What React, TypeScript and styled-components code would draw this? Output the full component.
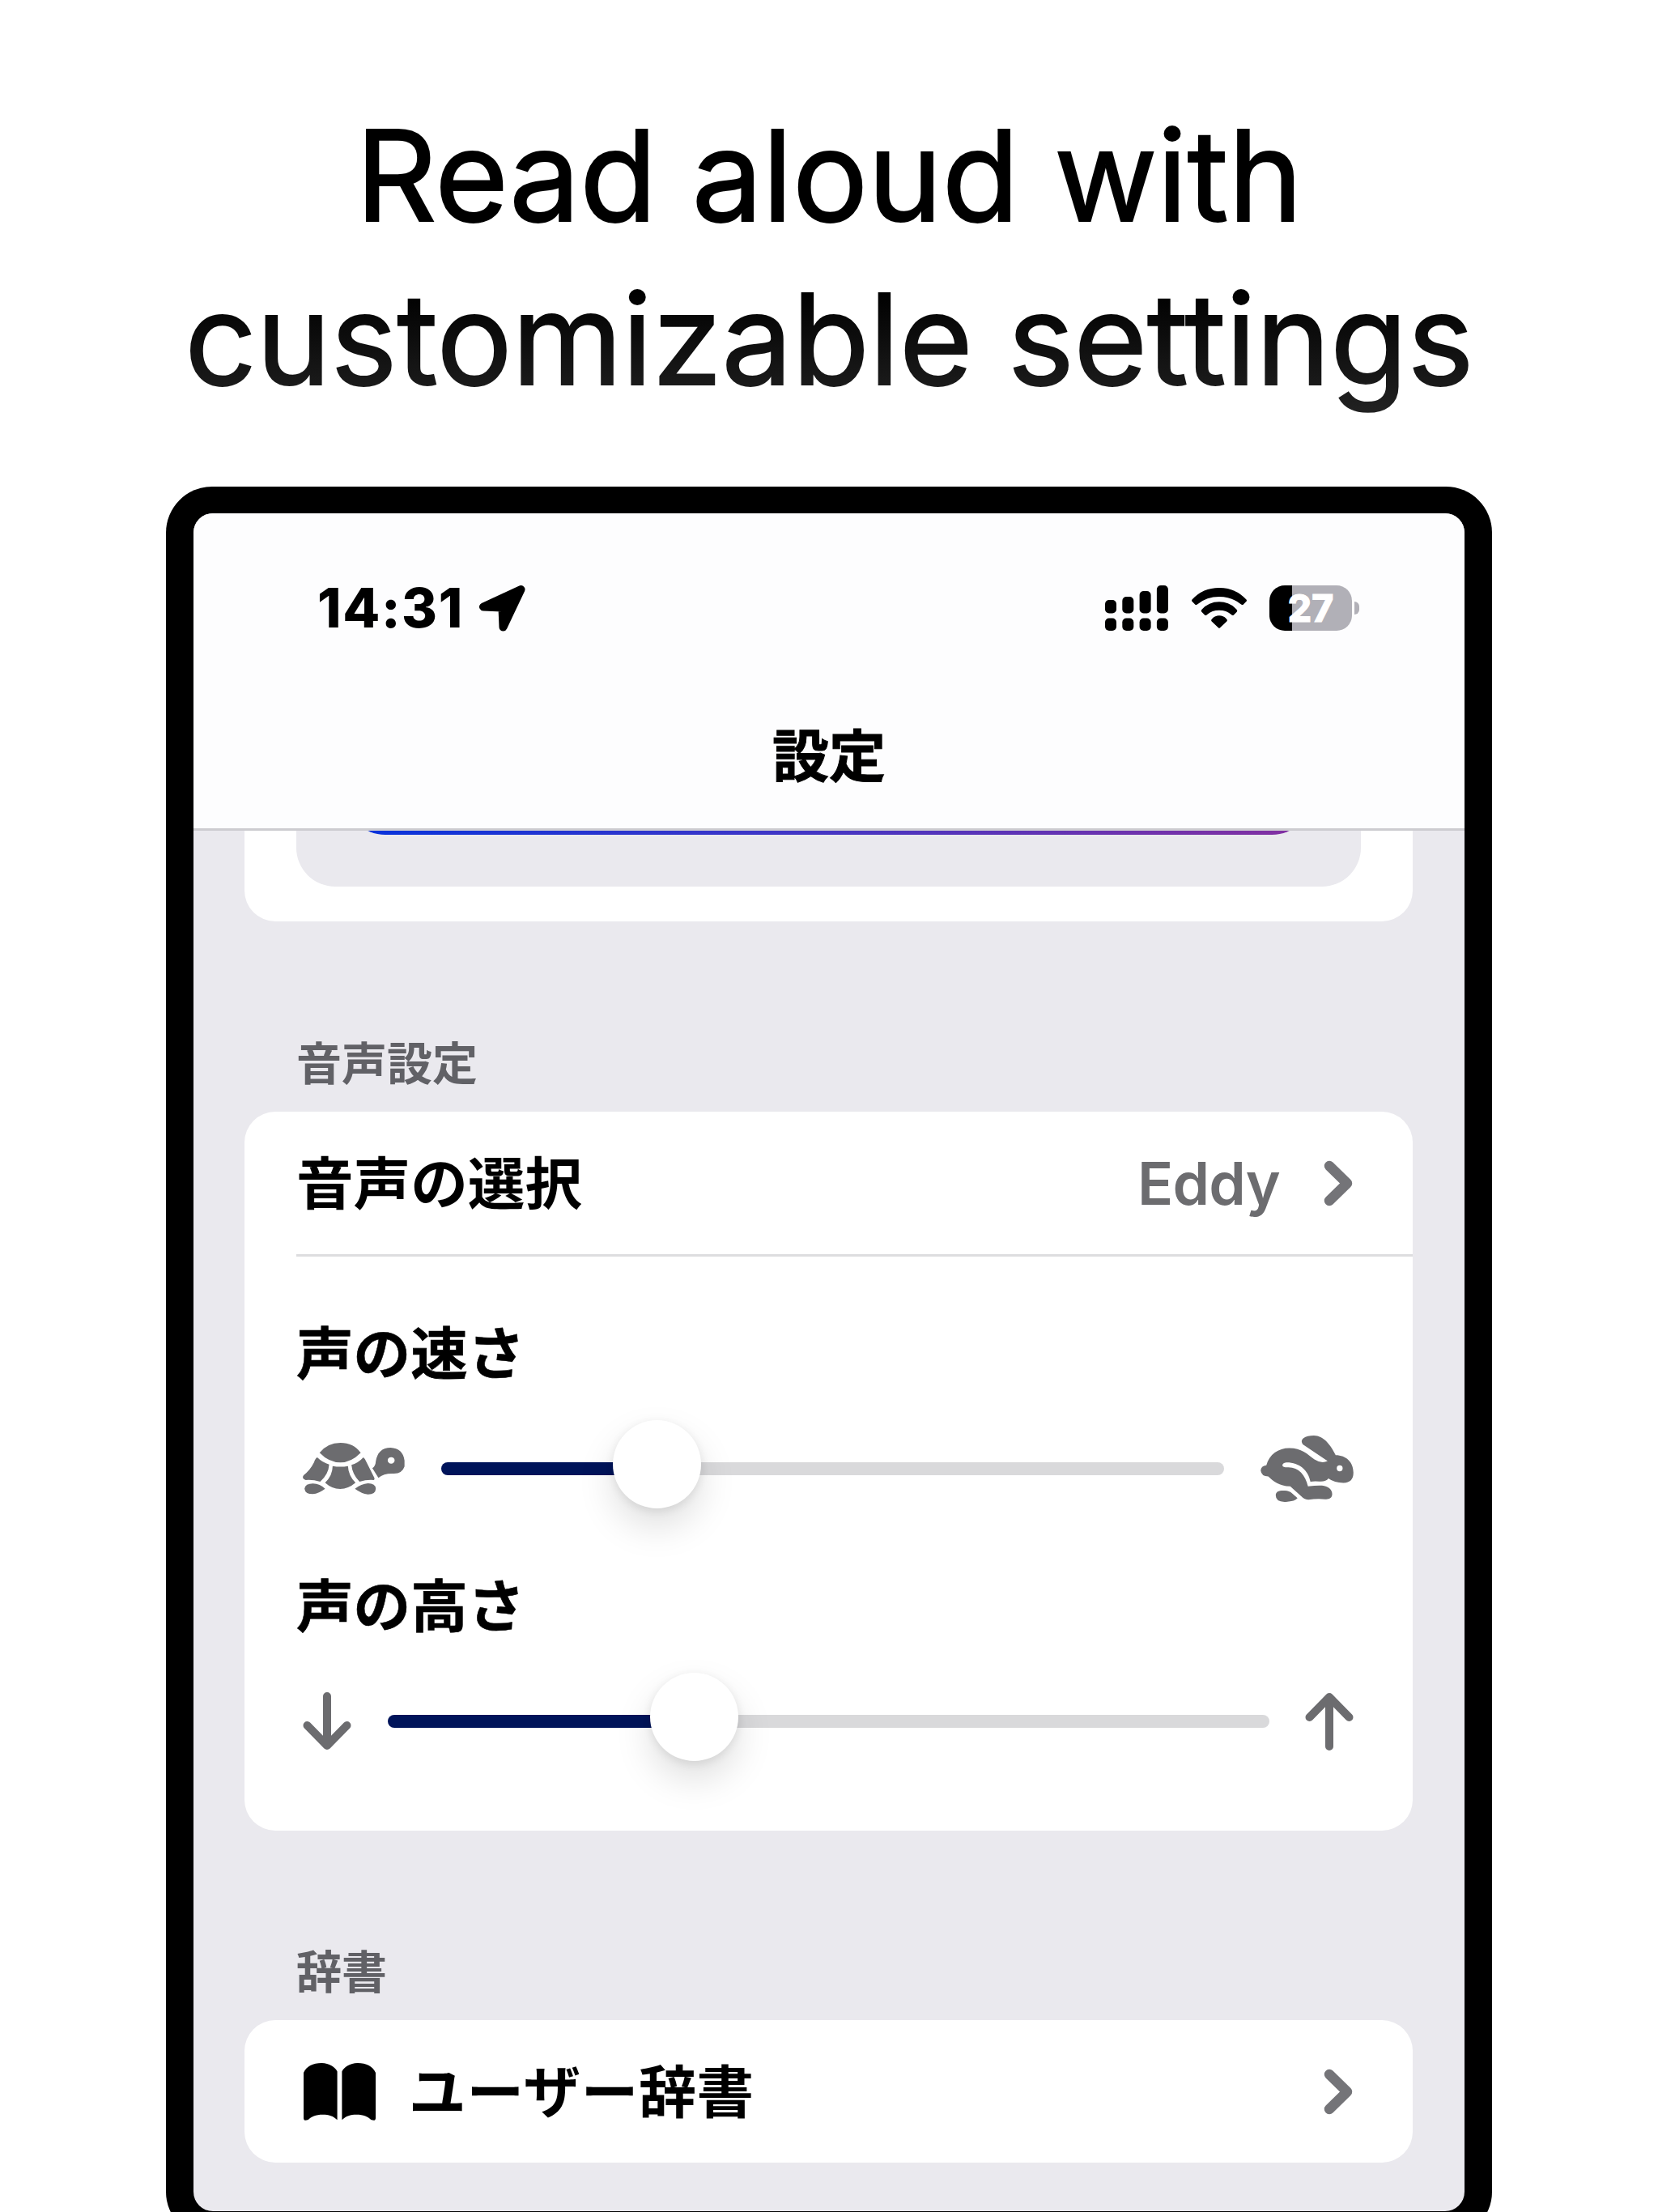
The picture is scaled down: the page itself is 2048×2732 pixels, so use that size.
import React from "react";
import styled, { createGlobalStyle } from "styled-components";

const latin = `Inter, "Noto Sans CJK JP", sans-serif`;
const japanese = `"Noto Sans CJK JP", Inter, sans-serif`;

const GlobalStyle = createGlobalStyle`
  *, *::before, *::after { box-sizing: border-box; }
  html, body { margin: 0; padding: 0; background: #fff; overflow: hidden; }
  svg { display: block; flex: none; }
`;

const Page = styled.main`
  width: 2048px;
  height: 2732px;
  padding-top: 116px;
  overflow: hidden;
  background: #fff;
  display: flex;
  flex-direction: column;
  align-items: center;
`;

const Headline = styled.h1`
  margin: 0 0 81px;
  width: 100%;
  height: 404px;
  flex: none;
  text-align: center;
  white-space: pre-line;
  font: 400 156px/202px ${latin};
  letter-spacing: -0.5px;
  color: transparent;
  -webkit-text-stroke: 1.8px transparent;
  background: linear-gradient(180deg, #000 60%, #242424 100%);
  background-clip: text;
  -webkit-background-clip: text;
`;

const Device = styled.section`
  width: 1638px;
  height: 2163px;
  flex: none;
  padding: 33px 34px;
  border-radius: 57px;
  background: #000;
`;

const Screen = styled.div`
  width: 100%;
  height: 100%;
  border-radius: 24px;
  overflow: hidden;
  background: #eae9ee;
  display: flex;
  flex-direction: column;
`;

const Header = styled.header`
  height: 392px;
  flex: none;
  background: #fdfdfe;
  border-bottom: 3px solid #cdccd0;
`;

const StatusBar = styled.div`
  height: 234px;
  padding: 0 130px 0 153px;
  display: flex;
  justify-content: space-between;
  align-items: center;
`;

const StatusGroup = styled.div<{ $gap: number }>`
  display: flex;
  align-items: center;
  gap: ${(p) => p.$gap}px;
`;

const Clock = styled.time`
  font: 780 67px/80px ${latin};
  letter-spacing: 1.6px;
  color: #000;
`;

const Battery = styled.div`
  display: flex;
  align-items: center;
  gap: 3px;
`;

const BatteryBody = styled.div`
  width: 102px;
  height: 56px;
  border-radius: 19px;
  background: linear-gradient(90deg, #000 28.5px, #b1b0b7 28.5px);
  color: #fff;
  -webkit-text-stroke: 1px #fff;
  text-align: center;
  font: 800 46px/56px ${latin};
`;

const BatteryCap = styled.div`
  width: 6px;
  height: 16px;
  border-radius: 0 6px 6px 0;
  background: #b1b0b7;
`;

const NavTitle = styled.h2`
  margin: 0;
  height: 124px;
  text-align: center;
  font: 700 70px/124px ${japanese};
  -webkit-text-stroke: 1px #000;
  color: #000;
`;

const Content = styled.div`
  flex: 1;
  padding: 0 64px 0 63px;
  display: flex;
  flex-direction: column;
`;

const ClippedCard = styled.div`
  height: 112px;
  flex: none;
  padding: 0 64px 43px;
  border-radius: 0 0 38px 38px;
  background: #fff;
`;

const ClippedPanel = styled.div`
  height: 100%;
  overflow: hidden;
  border-radius: 0 0 48px 48px;
  background: #eae9ee;
  padding: 0 60px;
  display: flex;
  align-items: flex-end;
  padding-bottom: 64px;
`;

const GradientButton = styled.div`
  width: 100%;
  height: 100px;
  flex: none;
  border-radius: 50px;
  background: linear-gradient(90deg, #0633dc, #3f36c6 45%, #8430a0);
`;

const SectionLabel = styled.h3<{ $height: number }>`
  margin: 0;
  height: ${(p) => p.$height}px;
  flex: none;
  padding: 0 0 21px 64px;
  display: flex;
  align-items: flex-end;
  font: 700 56px/84px ${japanese};
  color: #616166;
`;

const Card = styled.div`
  flex: none;
  border-radius: 38px;
  background: #fff;
`;

const Row = styled.div`
  height: 176px;
  padding: 0 74px 0 64px;
  display: flex;
  align-items: center;
`;

const RowLabel = styled.span<{ $tracking?: number }>`
  flex: 1;
  padding-bottom: 8px;
  font: 700 70.6px/100px ${japanese};
  letter-spacing: ${(p) => p.$tracking ?? 0}px;
  color: #000;
`;

const RowValue = styled.span`
  margin-right: 54px;
  padding-top: 1px;
  font: 600 73px/90px ${latin};
  letter-spacing: -0.7px;
  color: #6c6c6f;
`;

const Divider = styled.div`
  height: 3px;
  margin-left: 64px;
  background: #dddddf;
`;

const Sliders = styled.div`
  height: 709px;
  padding: 65px 73px 0 64px;
`;

const SliderField = styled.div`
  height: 312px;
`;

const SliderLabel = styled.div`
  height: 100px;
  font: 700 70.6px/100px ${japanese};
  -webkit-text-stroke: 0.6px #000;
  color: #000;
`;

const SliderLine = styled.div<{ $left: number; $right: number }>`
  height: 110px;
  margin-top: 42px;
  padding-left: 8px;
  display: flex;
  align-items: center;
  & > :first-child { margin-right: ${(p) => p.$left}px; }
  & > :last-child { margin-left: ${(p) => p.$right}px; }
`;

const Track = styled.div<{ $value: number }>`
  position: relative;
  flex: 1;
  height: 16px;
  border-radius: 8px;
  background: linear-gradient(90deg, #00145a ${(p) => p.$value}%, #d9d9db ${(p) => p.$value}%);
`;

const Thumb = styled.div<{ $value: number }>`
  position: absolute;
  top: -52px;
  left: ${(p) => p.$value}%;
  width: 109px;
  height: 109px;
  margin-left: -55px;
  border-radius: 50%;
  background: #fff;
  box-shadow: 0 22px 46px rgba(0, 0, 0, 0.13), 0 3px 12px rgba(0, 0, 0, 0.09);
`;

const IconLabel = styled.div`
  flex: 1;
  padding-left: 9px;
  display: flex;
  align-items: center;
  gap: 41px;
`;

const LocationArrow = () => (
  <svg width="57" height="57" viewBox="0 0 57 57">
    <path d="M51.5 5 5 26.5 28.5 27.5 29.5 51.5Z" stroke="#000" strokeWidth="10" strokeLinejoin="round" />
  </svg>
);

const Signal = () => (
  <svg width="79" height="56" viewBox="0 0 79 56">
    {[18, 14, 7, 0].map((top, i) => (
      <g key={top}>
        <rect x={i * 21.3} y={top} width="14" height={34.5 - top} rx="5" />
        <rect x={i * 21.3} y="40.5" width="14" height="15.5" rx="5" />
      </g>
    ))}
  </svg>
);

const Wifi = () => (
  <svg width="68" height="50" viewBox="483 405 188 150" preserveAspectRatio="none">
    <path d="M485 448Q521 405 577 405 633 405 669 448 673 452 669 456L659 467Q655 470 650 465 620 438 577 438 534 438 504 465 499 470 495 467L485 456Q481 452 485 448Z" />
    <path d="M517 486Q541 457 577 457 613 457 637 486 640 490 637 494L626 506Q622 509 618 504 602 488 577 488 552 488 536 504 532 509 528 506L517 494Q514 490 517 486Z" />
    <path d="M551 522Q561 508 577 508 593 508 603 522 606 526 602 530L580 553Q577 556 574 553L552 530Q548 526 551 522Z" />
  </svg>
);

const Chevron = () => (
  <svg width="36" height="57" viewBox="0 0 36 57">
    <path d="M7 7 29 28.5 7 50" fill="none" stroke="#747478" strokeWidth="12.5" strokeLinecap="round" strokeLinejoin="round" />
  </svg>
);

const Turtle = () => (
  <svg width="126" height="64" viewBox="95 120 352 192" preserveAspectRatio="none" fill="#6c6c6f">
    <path d="M153 157Q180 120 225 120 270 120 295 157 262 193 225 193 185 193 153 157Z" />
    <path d="M145 174Q164 194 186 200 184 236 155 264 130 256 105 258 90 252 98 240 120 222 134 192 138 178 145 174Z" />
    <path d="M198 206Q225 211 251 206 252 240 277 268 252 291 224 291 195 291 172 268 198 240 198 206Z" />
    <path d="M304 174Q286 195 263 202 266 238 291 264 315 256 340 258 344 256 342 250L315 192Q310 178 304 174Z" />
    <path fillRule="evenodd" d="M335 214Q346 206 347 188 355 138 398 138 440 140 446 185L446 208Q438 234 410 234 375 232 356 250ZM388 185a12 12 0 1 0 24 0a12 12 0 1 0-24 0Z" />
    <path d="M101 290Q104 271 130 271 155 272 172 290 150 308 130 310 103 310 101 290Z" />
    <path d="M275 290Q297 272 320 270 346 270 347 290 346 311 320 311 297 308 275 290Z" />
  </svg>
);

const Rabbit = () => (
  <svg width="115" height="82" viewBox="232 94 345 247" fill="#6c6c6f">
    <path
      fillRule="evenodd"
      d="M232 224Q233 208 253 205C264 164 298 141 338 141C385 141 404 163 432 183Q458 200 481 189L389 127Q379 114 391 104Q405 94 430 94C468 95 492 130 511 167C550 167 577 193 577 232Q577 270 540 270Q506 270 484 254Q474 267 450 265Q430 263 417 266C409 222 374 193 327 194Q312 196 313 206Q316 213 335 212C374 213 398 240 408 283Q440 279 460 280C484 282 498 295 498 312C498 326 488 332 472 331Q440 328 410 333Q396 333 383 320L342 283C300 282 280 264 260 246Q235 246 232 224ZM515 216a11 11 0 1 0 22 0a11 11 0 1 0-22 0Z"
    />
    <path d="M288 317C288 302 300 298 322 299Q338 299 350 310L369 327Q361 339 326 341Q288 342 288 317Z" />
  </svg>
);

const Arrow = ({ up = false }: { up?: boolean }) => (
  <svg width="60" height="72" viewBox="0 0 60 72" fill="none" stroke="#6c6c6f" strokeWidth="10" strokeLinecap="round" strokeLinejoin="round">
    <path d={up ? "M30 67V6M5.500 31 30 6 54.500 31" : "M30 5V66M5.500 41 30 66 54.500 41"} />
  </svg>
);

const Book = () => (
  <svg width="89" height="71" viewBox="381 321 184 212" preserveAspectRatio="none">
    <path d="M381 357C388 333 405 321 427 321C447 322 461 335 467 352L467 531C457 516 445 511 430 511C412 511 400 519 393 530Q381 537 381 524Z" />
    <path d="M565 357C558 333 541 321 519 321C499 322 485 335 479 352L479 531C489 516 501 511 516 511C534 511 546 519 553 530Q565 537 565 524Z" />
  </svg>
);

function Slider({ label, value, start, end, left, right }: {
  label: string;
  value: number;
  start: React.ReactNode;
  end: React.ReactNode;
  left: number;
  right: number;
}) {
  return (
    <SliderField>
      <SliderLabel>{label}</SliderLabel>
      <SliderLine $left={left} $right={right}>
        {start}
        <Track $value={value}>
          <Thumb $value={value} />
        </Track>
        {end}
      </SliderLine>
    </SliderField>
  );
}

export default function App() {
  return (
    <>
      <GlobalStyle />
      <Page>
        <Headline>{"Read aloud with\ncustomizable settings"}</Headline>
        <Device>
          <Screen>
            <Header>
              <StatusBar>
                <StatusGroup $gap={19}>
                  <Clock>14:31</Clock>
                  <LocationArrow />
                </StatusGroup>
                <StatusGroup $gap={28}>
                  <Signal />
                  <Wifi />
                  <Battery>
                    <BatteryBody>27</BatteryBody>
                    <BatteryCap />
                  </Battery>
                </StatusGroup>
              </StatusBar>
              <NavTitle>設定</NavTitle>
            </Header>
            <Content>
              <ClippedCard>
                <ClippedPanel>
                  <GradientButton />
                </ClippedPanel>
              </ClippedCard>
              <SectionLabel $height={235}>音声設定</SectionLabel>
              <Card>
                <Row>
                  <RowLabel>音声の選択</RowLabel>
                  <RowValue>Eddy</RowValue>
                  <Chevron />
                </Row>
                <Divider />
                <Sliders>
                  <Slider label="声の速さ" value={27.6} start={<Turtle />} end={<Rabbit />} left={45} right={45} />
                  <Slider label="声の高さ" value={34.8} start={<Arrow />} end={<Arrow up />} left={45} right={44} />
                </Sliders>
              </Card>
              <SectionLabel $height={234}>辞書</SectionLabel>
              <Card>
                <Row>
                  <IconLabel>
                    <Book />
                    <RowLabel $tracking={0.8}>ユーザー辞書</RowLabel>
                  </IconLabel>
                  <Chevron />
                </Row>
              </Card>
            </Content>
          </Screen>
        </Device>
      </Page>
    </>
  );
}
